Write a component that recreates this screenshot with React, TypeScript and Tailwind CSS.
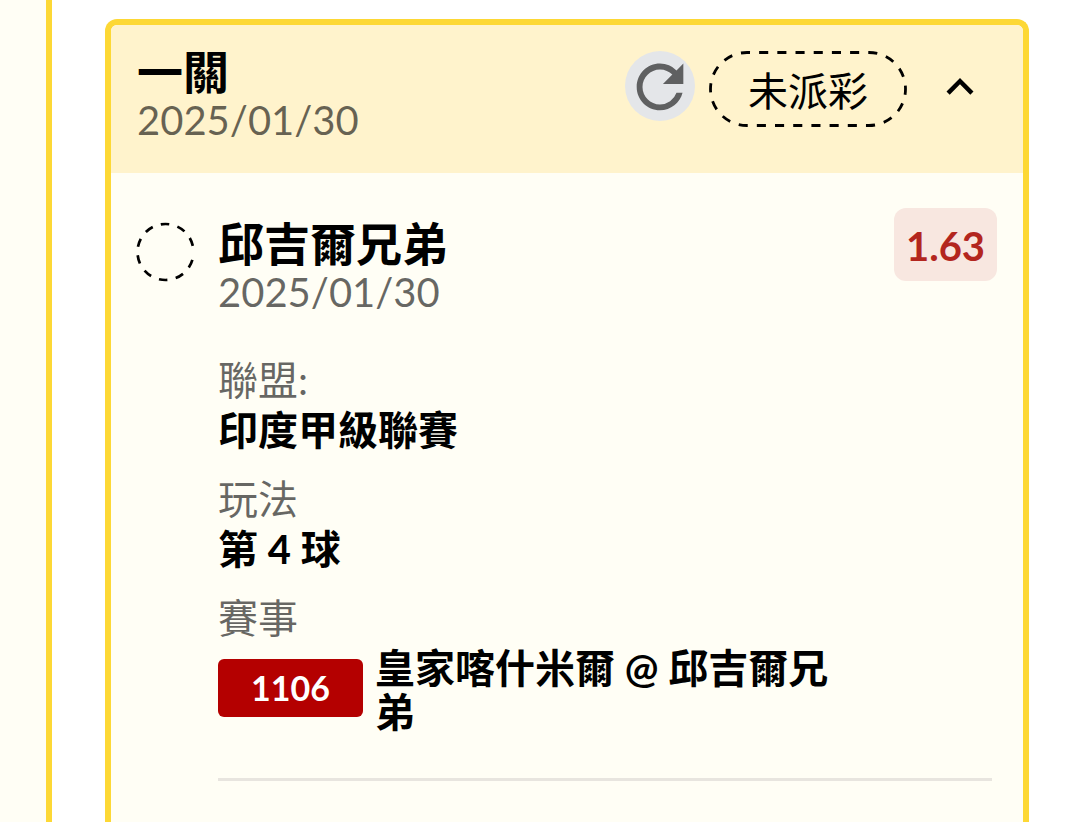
/**
 * BetSlip - Card with the status and the selections of a single bet
 */

import { ReactNode, useState } from 'react';

interface Selection {
  team: string;
  date: string;
  odds: string;
  league: string;
  market: string;
  matchCode: string;
  match: string;
}

const SELECTIONS: Selection[] = [
  {
    team: '邱吉爾兄弟',
    date: '2025/01/30',
    odds: '1.63',
    league: '印度甲級聯賽',
    market: '第 4 球',
    matchCode: '1106',
    match: '皇家喀什米爾 @ 邱吉爾兄弟',
  },
];

function RefreshIcon() {
  return (
    <svg viewBox="0 0 24 24" className="w-full h-full" fill="currentColor" aria-hidden="true">
      <path d="M17.65 6.65A7.958 7.958 0 0 0 12 4.3c-4.42 0-7.99 3.58-7.99 8s3.57 8 7.99 8c3.73 0 6.84-2.55 7.73-6h-2.08A5.99 5.99 0 0 1 12 18.3c-3.31 0-6-2.69-6-6s2.69-6 6-6c1.66 0 3.14.69 4.22 1.78L13 11.3h7V4.3z" />
    </svg>
  );
}

function ChevronIcon({ open }: { open: boolean }) {
  return (
    <svg
      viewBox="0 0 24 24"
      className={open ? 'w-full h-full' : 'w-full h-full rotate-180'}
      fill="currentColor"
      aria-hidden="true"
    >
      <path d="m12 8-6 6 1.41 1.41L12 10.83l4.59 4.58L18 14z" />
    </svg>
  );
}

function PendingCircle() {
  return (
    <svg viewBox="0 0 60 60" className="w-[60px] h-[60px] shrink-0" fill="none" aria-hidden="true">
      <circle
        cx="29.5"
        cy="30"
        r="28"
        stroke="currentColor"
        strokeWidth="2.7"
        strokeDasharray="8.5 8.5"
        strokeDashoffset="-8"
      />
    </svg>
  );
}

function StatusPill({ children }: { children: ReactNode }) {
  return (
    <span className="relative flex items-center justify-center w-[198px] h-[76px] pt-1 text-[40px] leading-[50px]">
      <svg
        viewBox="0 0 198 76"
        className="absolute inset-0 w-full h-full"
        fill="none"
        aria-hidden="true"
      >
        <rect
          x="1.5"
          y="1.5"
          width="195"
          height="73"
          rx="36.5"
          stroke="currentColor"
          strokeWidth="2.8"
          pathLength="468"
          strokeDasharray="9 9"
          strokeDashoffset="6"
        />
      </svg>
      {children}
    </span>
  );
}

function TitleBlock({ title, date }: { title: string; date: string }) {
  return (
    <div className="flex-1 min-w-0 leading-[48px]">
      <h2 className="text-[46px] font-bold">{title}</h2>
      <p className="text-[40px] text-black/60">{date}</p>
    </div>
  );
}

function Field({ label, children }: { label: string; children: ReactNode }) {
  return (
    <div className="text-[40px] leading-[50px]">
      <dt className="text-black/60">{label}</dt>
      <dd className="font-bold">{children}</dd>
    </div>
  );
}

function SelectionItem({ selection }: { selection: Selection }) {
  return (
    <li className="flex items-start gap-[22px] pl-[25px] pr-[26px] pt-[35px]">
      <div className="pt-[14px]">
        <PendingCircle />
      </div>
      <div className="flex-1 min-w-0">
        <div className="flex items-start">
          <div className="flex-1 min-w-0 pt-3">
            <TitleBlock title={selection.team} date={selection.date} />
          </div>
          <span className="flex items-center justify-center w-[103px] h-[73px] pt-0.5 rounded-xl bg-[#f8e7e0] text-[#b3261e] text-[40px] leading-[50px] font-bold">
            {selection.odds}
          </span>
        </div>
        <dl className="flex flex-col gap-[19px] pt-[39px]">
          <Field label="聯盟:">{selection.league}</Field>
          <Field label="玩法">{selection.market}</Field>
          <Field label="賽事">
            <span className="flex items-start gap-3 pr-36">
              <span className="flex items-center justify-center shrink-0 w-[145px] h-[58px] mt-4 rounded-md bg-[#b40000] text-white text-[34px]">
                {selection.matchCode}
              </span>
              <span className="pt-[3px] leading-[44px]">{selection.match}</span>
            </span>
          </Field>
        </dl>
        <hr className="mt-11 mr-[5px] border-0 h-[3px] bg-[#e8e5df]" />
      </div>
    </li>
  );
}

export default function App() {
  const [open, setOpen] = useState(true);

  return (
    <div className="flex min-h-screen bg-white text-black font-['Lato','Noto_Sans_CJK_TC',sans-serif]">
      <div className="w-[52px] shrink-0 bg-[#fffef5] border-r-6 border-[#fdd835]" />
      <main className="flex flex-1 min-w-0 pl-[53px] pr-[51px] pt-[19px]">
        <section className="flex-1 min-w-0 bg-[#fffef5] border-6 border-b-0 border-[#fdd835] rounded-t-xl overflow-hidden">
          <header className="flex items-start px-[26px] pt-[23px] pb-[29px] bg-[#fff3cc]">
            <TitleBlock title="一關" date="2025/01/30" />
            <div className="flex items-start pt-[3px]">
              <button
                type="button"
                aria-label="重新整理"
                className="w-[70px] h-[70px] rounded-full bg-[#e4e6e9] text-[#5f6061]"
              >
                <RefreshIcon />
              </button>
              <div className="pl-[14px] pr-[26px]">
                <StatusPill>未派彩</StatusPill>
              </div>
              <button
                type="button"
                aria-label="展開或收合"
                aria-expanded={open}
                onClick={() => setOpen(!open)}
                className="w-[54px] h-[54px] mt-[9px] mr-[10px]"
              >
                <ChevronIcon open={open} />
              </button>
            </div>
          </header>
          {open && (
            <ul>
              {SELECTIONS.map(selection => (
                <SelectionItem key={selection.matchCode} selection={selection} />
              ))}
            </ul>
          )}
        </section>
      </main>
    </div>
  );
}
